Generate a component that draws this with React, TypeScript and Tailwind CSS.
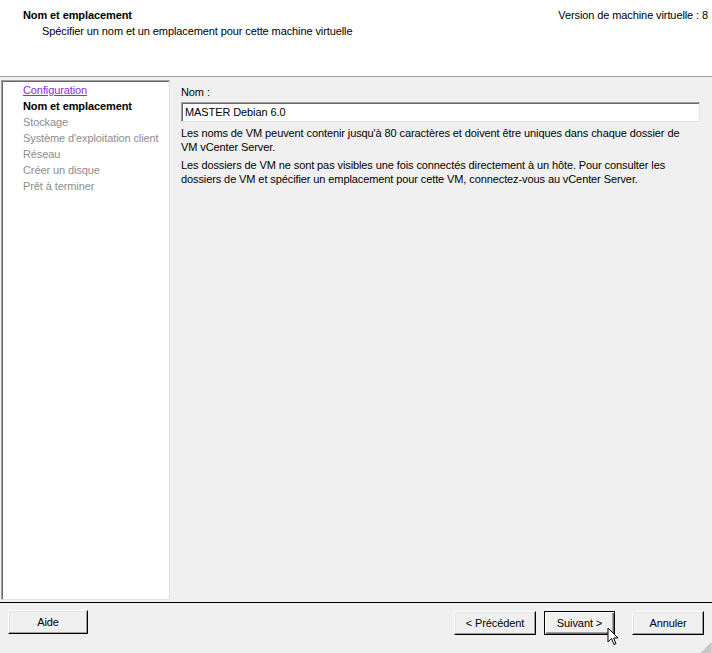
import React from "react";

const font = { fontFamily: '"Liberation Sans", Arial, sans-serif' };

function Btn({ label, def = false, w }: { label: string; def?: boolean; w: string }) {
  return (
    <div
      className={`${w} h-[24px] flex items-center justify-center text-[11px] text-black bg-[#f0f0f0] ${
        def
          ? "border border-black shadow-[inset_1px_1px_0_#ffffff,inset_-1px_-1px_0_#696969,inset_-2px_-2px_0_#a0a0a0]"
          : "border-t border-l border-white border-r border-b border-r-black border-b-black shadow-[inset_-1px_-1px_0_#a0a0a0,inset_1px_1px_0_#e3e3e3]"
      }`}
    >
      {label}
    </div>
  );
}

export default function App() {
  const nav = [
    { t: "Configuration", k: "link" },
    { t: "Nom et emplacement", k: "active" },
    { t: "Stockage", k: "off" },
    { t: "Système d'exploitation client", k: "off" },
    { t: "Réseau", k: "off" },
    { t: "Créer un disque", k: "off" },
    { t: "Prêt à terminer", k: "off" },
  ];
  return (
    <div style={font} className="relative w-[712px] h-[653px] bg-[#f0f0f0] flex flex-col text-[11px] tracking-[-0.1px] text-black overflow-hidden">
      {/* header */}
      <div className="h-[77px] shrink-0 bg-white border-b border-[#a0a0a0] flex justify-between pt-[8px] pl-[23px] pr-[4px]">
        <div className="flex flex-col">
          <div className="font-bold leading-[14px]">Nom et emplacement</div>
          <div className="leading-[14px] mt-[2px] pl-[19px]">Spécifier un nom et un emplacement pour cette machine virtuelle</div>
        </div>
        <div className="leading-[14px]">Version de machine virtuelle : 8</div>
      </div>

      {/* body */}
      <div className="flex flex-1 pt-[3px] pl-[1px] pb-[2px]">
        <div className="w-[170px] h-[520px] bg-white border-t border-l border-[#a0a0a0] border-r border-b border-r-[#e3e3e3] border-b-[#e3e3e3] shadow-[inset_1px_1px_0_#696969] pl-[21px] pt-[1px]">
          {nav.map((n) => (
            <div
              key={n.t}
              className={`leading-[16px] whitespace-nowrap ${
                n.k === "link"
                  ? "text-[#8b2be2] underline"
                  : n.k === "active"
                  ? "font-bold text-black"
                  : "text-[#8d8d8d]"
              }`}
            >
              {n.t}
            </div>
          ))}
        </div>
        <div className="flex-1 pl-[11px] pr-[12px] pt-[5px]">
          <div className="leading-[14px]">Nom :</div>
          <div className="mt-[3px] h-[20px] w-[519px] bg-white border-t border-l border-[#a0a0a0] border-r border-b border-r-[#e3e3e3] border-b-[#e3e3e3] shadow-[inset_1px_1px_0_#696969] flex items-center pl-[3px] leading-[14px]">
            MASTER Debian 6.0
          </div>
          <div className="mt-[4px] leading-[14px] w-[506px]">
            Les noms de VM peuvent contenir jusqu'à 80 caractères et doivent être uniques dans chaque dossier de VM vCenter Server.
          </div>
          <div className="mt-[4px] leading-[14px] w-[506px]">
            Les dossiers de VM ne sont pas visibles une fois connectés directement à un hôte. Pour consulter les dossiers de VM et spécifier un emplacement pour cette VM, connectez-vous au vCenter Server.
          </div>
        </div>
      </div>

      {/* footer */}
      <div className="h-[51px] shrink-0 border-t border-black flex items-start pt-[7px] pl-[8px] pr-[8px]">
        <Btn label="Aide" w="w-[80px]" />
        <div className="flex-1" />
        <div className="flex items-start pt-[1px]">
          <Btn label="< Précédent" w="w-[82px]" />
          <div className="ml-[8px]">
            <Btn label="Suivant >" w="w-[71px]" def />
          </div>
          <div className="ml-[17px]">
            <Btn label="Annuler" w="w-[72px]" />
          </div>
        </div>
      </div>

      {/* cursor */}
      <svg className="absolute left-[607px] top-[627px]" width="14" height="20" viewBox="0 0 14 20">
        <path d="M1 1 L1 15 L4.5 11.5 L7 17.5 L9 16.7 L6.6 11 L11 11 Z" fill="white" stroke="black" strokeWidth="1" strokeLinejoin="miter" />
      </svg>

      {/* resize grip */}
      <svg className="absolute right-0 bottom-0" width="14" height="14" viewBox="0 0 14 14">
        {[0, 4, 8].map((o) => (
          <g key={o}>
            <line x1={13 - o + 0.5} y1={14} x2={14} y2={13 - o + 0.5} stroke="#a0a0a0" strokeWidth="1" />
            <line x1={11 - o + 0.5} y1={14} x2={14} y2={11 - o + 0.5} stroke="#a0a0a0" strokeWidth="1" />
          </g>
        ))}
      </svg>
    </div>
  );
}
